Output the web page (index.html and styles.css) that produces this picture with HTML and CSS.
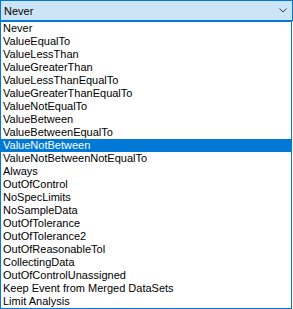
FILE: index.html
```html
<!DOCTYPE html>
<html lang="en">
<head>
    <meta charset="UTF-8">
    <title>Combo dropdown</title>
    <link rel="stylesheet" href="styles.css">
</head>
<body>
    <!-- Combo box -->
    <div class="combo">
        <div class="combo-box">
            <span class="combo-text">Never</span>
            <svg class="chevron" width="8" height="5" viewBox="0 0 8 5">
                <polyline points="0.5,0.5 4,4 7.5,0.5" fill="none" stroke="#3c3c3c" stroke-width="1"/>
            </svg>
        </div>

        <!-- Drop down list -->
        <ul class="list">
            <li>Never</li>
            <li>ValueEqualTo</li>
            <li>ValueLessThan</li>
            <li>ValueGreaterThan</li>
            <li>ValueLessThanEqualTo</li>
            <li>ValueGreaterThanEqualTo</li>
            <li>ValueNotEqualTo</li>
            <li>ValueBetween</li>
            <li>ValueBetweenEqualTo</li>
            <li class="selected">ValueNotBetween</li>
            <li>ValueNotBetweenNotEqualTo</li>
            <li>Always</li>
            <li>OutOfControl</li>
            <li>NoSpecLimits</li>
            <li>NoSampleData</li>
            <li>OutOfTolerance</li>
            <li>OutOfTolerance2</li>
            <li>OutOfReasonableTol</li>
            <li>CollectingData</li>
            <li>OutOfControlUnassigned</li>
            <li>Keep Event from Merged DataSets</li>
            <li>Limit Analysis</li>
        </ul>
    </div>
</body>
</html>
```

FILE: styles.css
```css
* {
    margin: 0;
    padding: 0;
    box-sizing: border-box;
}

body {
    background-color: #fff;
    font-family: "Liberation Sans", Arial, sans-serif;
    font-size: 11px;
    color: #000;
}

.combo {
    width: 293px;
}

/* Header */
.combo-box {
    display: flex;
    align-items: center;
    justify-content: space-between;
    height: 21px;
    padding: 0 5px 0 3px;
    background-color: #cce4f7;
    border: 1px solid #0078d7;
}

.chevron {
    display: block;
}

/* List */
.list {
    list-style: none;
    width: 292px;
    border: 1px solid #0078d7;
}

.list li {
    height: 13px;
    line-height: 13px;
    padding-left: 2px;
    white-space: nowrap;
}

.list li.selected {
    background-color: #0078d7;
    color: #fff;
}
```
